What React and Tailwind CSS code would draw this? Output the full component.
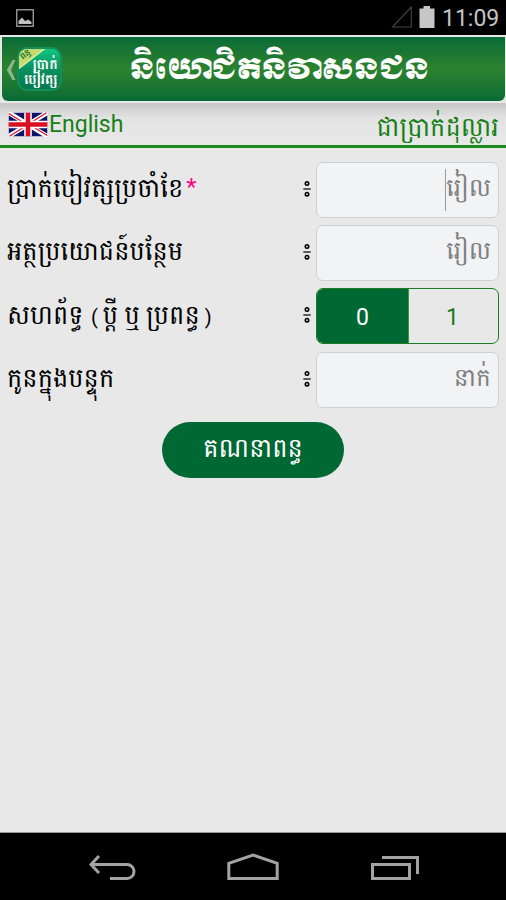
function StatusBar() {
  return (
    <div className="flex h-[35px] shrink-0 items-center bg-black pr-[9px] pl-[16px]">
      <svg width="18" height="18" viewBox="0 0 18 18">
        <rect x="0.75" y="0.75" width="16.5" height="16.5" fill="none" stroke="#a3a3a3" strokeWidth="1.3" />
        <path d="M2.5 15V12L5 9.5L6.5 8.8L8 11L9.5 12L12 10.5L15.5 13V15Z" fill="#c2c2c2" />
      </svg>
      <div className="ml-auto flex items-center">
        <svg width="22" height="24" viewBox="0 0 22 24">
          <path d="M1.5 21L20.3 1V21Z" fill="none" stroke="#444" strokeWidth="1.1" />
        </svg>
        <svg className="ml-[6px]" width="16" height="24" viewBox="0 0 16 24">
          <path d="M0.5 2.5H4.5V0H11V2.5H15.5V22H0.5Z" fill="#c6c6c6" />
        </svg>
        <span className="ml-[7px] w-[55px] pt-[2px] text-right text-[23px] leading-none whitespace-nowrap text-[#c4c4c4]">11:09</span>
      </div>
    </div>
  );
}

function AppIcon() {
  return (
    <div className="relative h-[44px] w-[45px] overflow-hidden rounded-[10px] border-2 border-[#10905a] bg-linear-to-b from-[#12c681] via-[#0a9160] to-[#06784d] text-white">
      <svg className="absolute -top-[2px] -left-[2px]" width="31" height="24" viewBox="0 0 31 24">
        <path d="M0 0H30L0 23Z" fill="#c5d96c" />
        <path d="M30 0L0 23" stroke="#e6eeb0" strokeWidth="1.2" />
      </svg>
      <span className="absolute top-[1px] left-[1px] -rotate-[37deg] text-[9px] leading-none font-bold text-[#16733a]">ពន្ធ</span>
      <div className="absolute top-[8px] right-[2px] flex flex-col items-end font-bold whitespace-nowrap">
        <span className="text-[13.5px] leading-[15px]">ប្រាក់</span>
        <span className="text-[14px] leading-[15px]">បៀវត្ស</span>
      </div>
    </div>
  );
}

function Header() {
  return (
    <header className="flex h-[68px] shrink-0 items-start bg-[#e7e7e7] px-[1.5px] pt-[2px] pb-[1px]">
      <div className="flex h-[64px] w-full items-center rounded-b-[6px] bg-linear-to-b from-[#066b35] via-[#2b822e] to-[#066b35] pl-[4px]">
        <svg className="mt-[2px]" width="11" height="22" viewBox="0 0 11 22">
          <path d="M9.5 1H6.5L0.8 11L6.5 21H9.5L5 11Z" fill="#86b98d" />
        </svg>
        <AppIcon />
        <h1 className="ml-[68px] w-[300px] pt-[2px] font-[Moul,'Khmer_OS_Muol_Light','Noto_Sans_Khmer',sans-serif] text-[28.5px] leading-[44px] whitespace-nowrap text-white">
          និយោជិតនិវាសនជន
        </h1>
      </div>
    </header>
  );
}

function UkFlag() {
  return (
    <svg width="40" height="25" viewBox="0 0 40 25">
      <rect width="40" height="25" fill="#fff" />
      <rect x="0.7" y="0.7" width="38.6" height="23.6" fill="#0d1268" />
      <path d="M0.7 0.7L39.3 24.3M39.3 0.7L0.7 24.3" stroke="#fff" strokeWidth="4.5" />
      <path d="M0.7 1.5L17 11.5M39.3 23.5L23 13.5M38.5 0.7L23 10.5M1.5 24.3L17 14.5" stroke="#d5132d" strokeWidth="1.3" />
      <path d="M20 0.7V24.3M0.7 12.5H39.3" stroke="#fff" strokeWidth="7.6" />
      <path d="M20 0.7V24.3M0.7 12.5H39.3" stroke="#d90f22" strokeWidth="4.6" />
    </svg>
  );
}

function LanguageBar() {
  return (
    <div className="flex h-[45px] shrink-0 items-center justify-between border-b-[3px] border-[#1f8c1f] bg-linear-to-b from-[#c6c6c6] via-[#e3e3e3] via-35% to-[#e8e8e8] pr-[7px] pl-[8px] text-[#168016]">
      <div className="flex items-center">
        <UkFlag />
        <span className="ml-[1px] pt-[1px] text-[23px] leading-none">English</span>
      </div>
      <span className="pt-[5px] text-[25.7px] leading-[34px] whitespace-nowrap">ជាប្រាក់ដុល្លារ</span>
    </div>
  );
}

function Colon() {
  return (
    <svg className="mr-[5px] shrink-0" width="8" height="16" viewBox="0 0 8 16">
      <circle cx="4" cy="2.5" r="1.7" fill="none" stroke="#000" strokeWidth="1.6" />
      <path d="M0.3 8H7.7" stroke="#000" strokeWidth="1.2" />
      <circle cx="4" cy="13.2" r="1.7" fill="none" stroke="#000" strokeWidth="1.6" />
    </svg>
  );
}

function Row({ label, required, children }) {
  return (
    <div className="flex h-[56px] items-center">
      <div className="flex flex-1 items-center pb-[4px] text-[25.7px] leading-[40px] whitespace-nowrap text-black">
        <span>{label}</span>
        {required && <span className="ml-[3px] pb-[2px] text-[24px] leading-[30px] text-[#ff0080]">*</span>}
      </div>
      <div className="pb-[2px]">
        <Colon />
      </div>
      {children}
    </div>
  );
}

function Field({ hint, focused }) {
  return (
    <div className="flex h-[56px] w-[183px] items-center justify-end rounded-[7px] border border-[#cfd0d1] bg-[#f1f3f5] pr-[7px]">
      {focused && <span className="h-[42px] w-px bg-[#999]" />}
      <span className="pb-[4px] text-[25px] leading-[42px] whitespace-nowrap text-[#808080]">{hint}</span>
    </div>
  );
}

function Toggle() {
  return (
    <div className="flex h-[56px] w-[183px] overflow-hidden rounded-[7px] border-[1.5px] border-[#1c7c25] text-[23px]">
      <div className="flex w-[91px] items-center justify-center bg-[#006833] pt-[3px] text-white">0</div>
      <div className="flex flex-1 items-center justify-center border-l border-[#3c9a3c] pt-[3px] pr-[2px] text-[#187a20]">1</div>
    </div>
  );
}

function NavBar() {
  return (
    <nav className="flex h-[67px] shrink-0 items-center bg-black pt-[3px] pl-[88px]">
      <svg width="48" height="30" viewBox="0 0 48 30" fill="none" stroke="#a3a3a3" strokeWidth="3">
        <path d="M3 11.5H39A6.8 6.8 0 0 1 39 25.5H22" />
        <path d="M11 3L3 11.5L11 20" />
      </svg>
      <svg className="ml-[91px]" width="52" height="30" viewBox="0 0 52 30" fill="none" stroke="#a3a3a3" strokeWidth="3">
        <path d="M1.8 25.5V10.3L26 2L50.2 10.3V25.5Z" />
      </svg>
      <svg className="ml-[91px]" width="50" height="30" viewBox="0 0 50 30" fill="none" stroke="#a3a3a3" strokeWidth="3">
        <path d="M2.5 11.5H39.5V25.5H2.5Z" />
        <path d="M12 4.5H47.5V21" />
      </svg>
    </nav>
  );
}

export default function App() {
  const spouseLabel = (
    <span className="inline-block pt-[3px]">
      សហព័ទ្ធ <span className="ml-px text-[20px]">( </span>ប្ដី ឬ ប្រពន្ធ<span className="text-[20px]"> )</span>
    </span>
  );

  return (
    <div className="flex h-[900px] w-[506px] flex-col overflow-hidden bg-[#e8e8e8] font-[Roboto,Battambang,'Noto_Sans_Khmer',sans-serif]">
      <StatusBar />
      <Header />
      <LanguageBar />
      <main className="flex flex-1 flex-col border-b border-[#999] px-[7px] pt-[14px]">
        <div className="flex flex-col gap-[7.2px]">
          <Row label="ប្រាក់បៀវត្សប្រចាំខែ" required>
            <Field hint="រៀល" focused />
          </Row>
          <Row label="អត្ថប្រយោជន៍បន្ថែម">
            <Field hint="រៀល" />
          </Row>
          <Row label={spouseLabel}>
            <Toggle />
          </Row>
          <Row label="កូនក្នុងបន្ទុក">
            <Field hint="នាក់" />
          </Row>
        </div>
        <button className="mt-[14px] h-[56px] w-[182px] self-center rounded-full bg-[#006833] pb-[4px] text-[25.7px] leading-[40px] whitespace-nowrap text-white">
          គណនាពន្ធ
        </button>
      </main>
      <NavBar />
    </div>
  );
}
